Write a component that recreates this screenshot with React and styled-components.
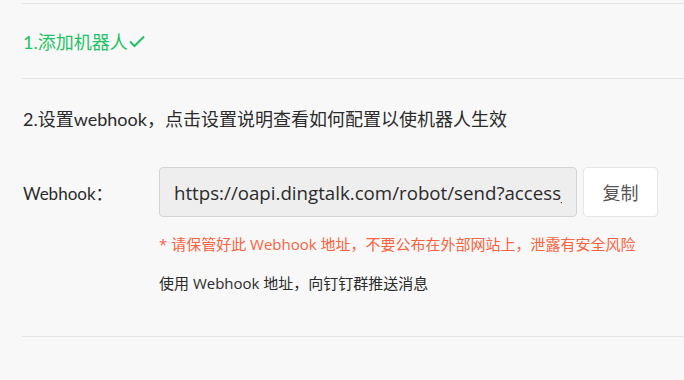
import React from "react";
import styled, { createGlobalStyle } from "styled-components";

const Global = createGlobalStyle`
  html, body { margin: 0; padding: 0; background: #f8f8f8; }
  body { font-family: Lato, "Noto Sans CJK SC", sans-serif; color: #333; }
`;

const Page = styled.div`
  padding: 3px 0 0 22px;
  background: #f8f8f8;
  min-height: 377px;
`;

const Section = styled.section`
  border-top: 1px solid #e4e4e4;
  border-bottom: ${(p) => (p.$last ? "1px solid #e4e4e4" : "none")};
`;

const StepDone = styled.div`
  height: 74px;
  display: flex;
  align-items: center;
  font-size: 18px;
  color: #1fc264;
  padding-left: 1px;
`;

const Check = styled.svg`
  width: 16px;
  height: 13px;
  margin-left: 1px;
  margin-top: 1px;
`;

const Body = styled.div`
  padding: 28px 0 43px 1px;
`;

const Title = styled.div`
  font-size: 18px;
  line-height: 24px;
  color: #2b2b2b;
`;

const Row = styled.div`
  display: flex;
  align-items: center;
  margin-top: 36px;
`;

const Label = styled.div`
  width: 136px;
  font-size: 17px;
  color: #2b2b2b;
`;

const UrlInput = styled.input`
  box-sizing: border-box;
  width: 418px;
  height: 50px;
  padding: 0 14px;
  border: 1px solid #d4d4d4;
  border-radius: 4px;
  background: #eeeeee;
  font-family: "Open Sans", "Noto Sans CJK SC", sans-serif;
  font-size: 18.7px;
  color: #2b2b2b;
  outline: none;
`;

const CopyButton = styled.button`
  box-sizing: border-box;
  width: 75px;
  height: 50px;
  margin-left: 6px;
  border: 1px solid #e6e6e6;
  border-radius: 4px;
  background: #fff;
  font-family: Lato, "Noto Sans CJK SC", sans-serif;
  font-size: 18px;
  color: #555;
  cursor: pointer;
`;

const Hint = styled.div`
  margin-left: 136px;
  margin-top: ${(p) => p.$mt}px;
  font-family: "Open Sans", "Noto Sans CJK SC", sans-serif;
  font-size: 15px;
  line-height: 20px;
  color: ${(p) => (p.$warn ? "#fb623f" : "#2b2b2b")};
`;

export default function App() {
  return (
    <>
      <Global />
      <Page>
        <Section>
          <StepDone>
            1.添加机器人
            <Check viewBox="0 0 16 13">
              <polyline
                points="1,6.5 5.5,11 15,1.5"
                fill="none"
                stroke="#1fc264"
                strokeWidth="2"
              />
            </Check>
          </StepDone>
        </Section>
        <Section $last>
          <Body>
            <Title>2.设置webhook，点击设置说明查看如何配置以使机器人生效</Title>
            <Row>
              <Label>Webhook：</Label>
              <UrlInput
                readOnly
                value="https://oapi.dingtalk.com/robot/send?access_token=xxxxxxxx"
              />
              <CopyButton>复制</CopyButton>
            </Row>
            <Hint $warn $mt={17}>
              * 请保管好此 Webhook 地址，不要公布在外部网站上，泄露有安全风险
            </Hint>
            <Hint $mt={19}>使用 Webhook 地址，向钉钉群推送消息</Hint>
          </Body>
        </Section>
      </Page>
    </>
  );
}
